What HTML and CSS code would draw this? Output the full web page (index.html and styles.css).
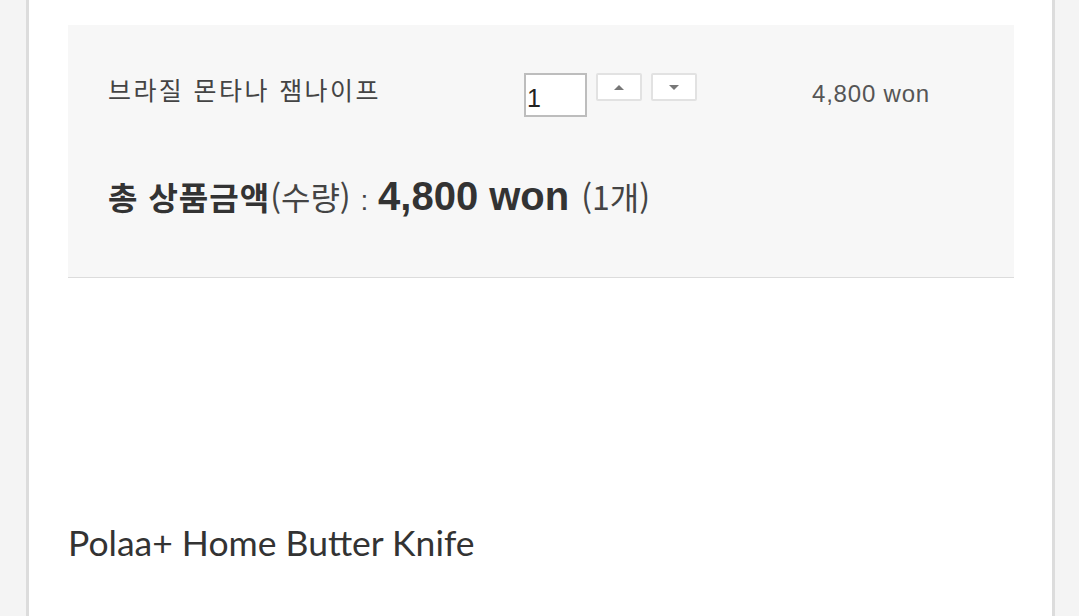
FILE: index.html
```html
<!DOCTYPE html>
<html lang="ko">
<head>
  <meta charset="UTF-8">
  <title>상품 선택</title>
  <link rel="stylesheet" href="styles.css">
</head>
<body>

  <div class="page">

    <div class="option-box">
      <div class="option-row">
        <p class="option-name">브라질 몬타나 잼나이프</p>
        <div class="qty">
          <input class="qty-input" type="text" value="1">
          <button class="qty-btn" type="button"><span class="tri up"></span></button>
          <button class="qty-btn" type="button"><span class="tri down"></span></button>
        </div>
        <p class="option-price">4,800 won</p>
      </div>

      <p class="total">
        <strong>총 상품금액</strong>(수량)<span class="colon"> : </span><span class="total-price">4,800 won</span> <span class="total-count">(1개)</span>
      </p>
    </div>

    <h2 class="next-title">Polaa+ Home Butter Knife</h2>

  </div>

</body>
</html>
```

FILE: styles.css
```css
* {
  margin: 0;
  padding: 0;
  box-sizing: border-box;
}

body {
  background: #f4f4f4;
  font-family: 'Noto Sans CJK KR', 'Noto Sans', sans-serif;
  color: #333;
  height: 616px;
  overflow: hidden;
}

.page {
  width: 1029px;
  margin-left: 26px;
  min-height: 616px;
  background: #fff;
  border-left: 3px solid #dcdcdc;
  border-right: 3px solid #dcdcdc;
  padding: 25px 38px 0 39px;
}

.option-box {
  background: #f7f7f7;
  border-bottom: 1px solid #dcdcdc;
  height: 253px;
  padding: 48px 40px 0;
}

.option-row {
  display: grid;
  grid-template-columns: 416px 288px auto;
  align-items: start;
}

.option-name {
  font-size: 25px;
  letter-spacing: 2.4px;
  color: #444;
  line-height: 42px;
  margin-top: -5px;
}

.qty {
  display: flex;
  gap: 9px;
  align-items: flex-start;
}

.qty-input {
  width: 63px;
  height: 44px;
  border: 2px solid #bdbdbd;
  background: #fff;
  font-family: 'Liberation Sans', sans-serif;
  font-size: 25px;
  color: #222;
  padding: 6px 0 0 1px;
  outline: none;
}

.qty-btn {
  width: 46px;
  height: 28px;
  border: 2px solid #e2e2e2;
  border-radius: 2px;
  background: #fff;
  display: flex;
  align-items: center;
  justify-content: center;
}

.tri {
  width: 0;
  height: 0;
  border-left: 5px solid transparent;
  border-right: 5px solid transparent;
}

.tri.up {
  border-bottom: 5px solid #777;
}

.tri.down {
  border-top: 5px solid #777;
}

.option-price {
  font-family: 'Liberation Sans', sans-serif;
  font-size: 24px;
  letter-spacing: 0.8px;
  color: #555;
  line-height: 42px;
}

.total {
  margin-top: 52px;
  font-size: 32px;
  color: #444;
  line-height: 54px;
}

.total strong {
  color: #333;
  font-weight: 700;
  letter-spacing: 1px;
}

.colon {
  font-family: 'Liberation Sans', sans-serif;
  font-size: 28px;
  padding: 0 2px;
}

.total-price {
  font-family: 'Liberation Sans', sans-serif;
  font-weight: 700;
  font-size: 40px;
  color: #333;
}

.total-count {
  font-size: 32px;
  margin-left: 3px;
}

.next-title {
  font-family: Lato, 'Noto Sans', sans-serif;
  font-weight: 400;
  font-size: 35.5px;
  color: #333;
  margin-top: 243px;
}
```
